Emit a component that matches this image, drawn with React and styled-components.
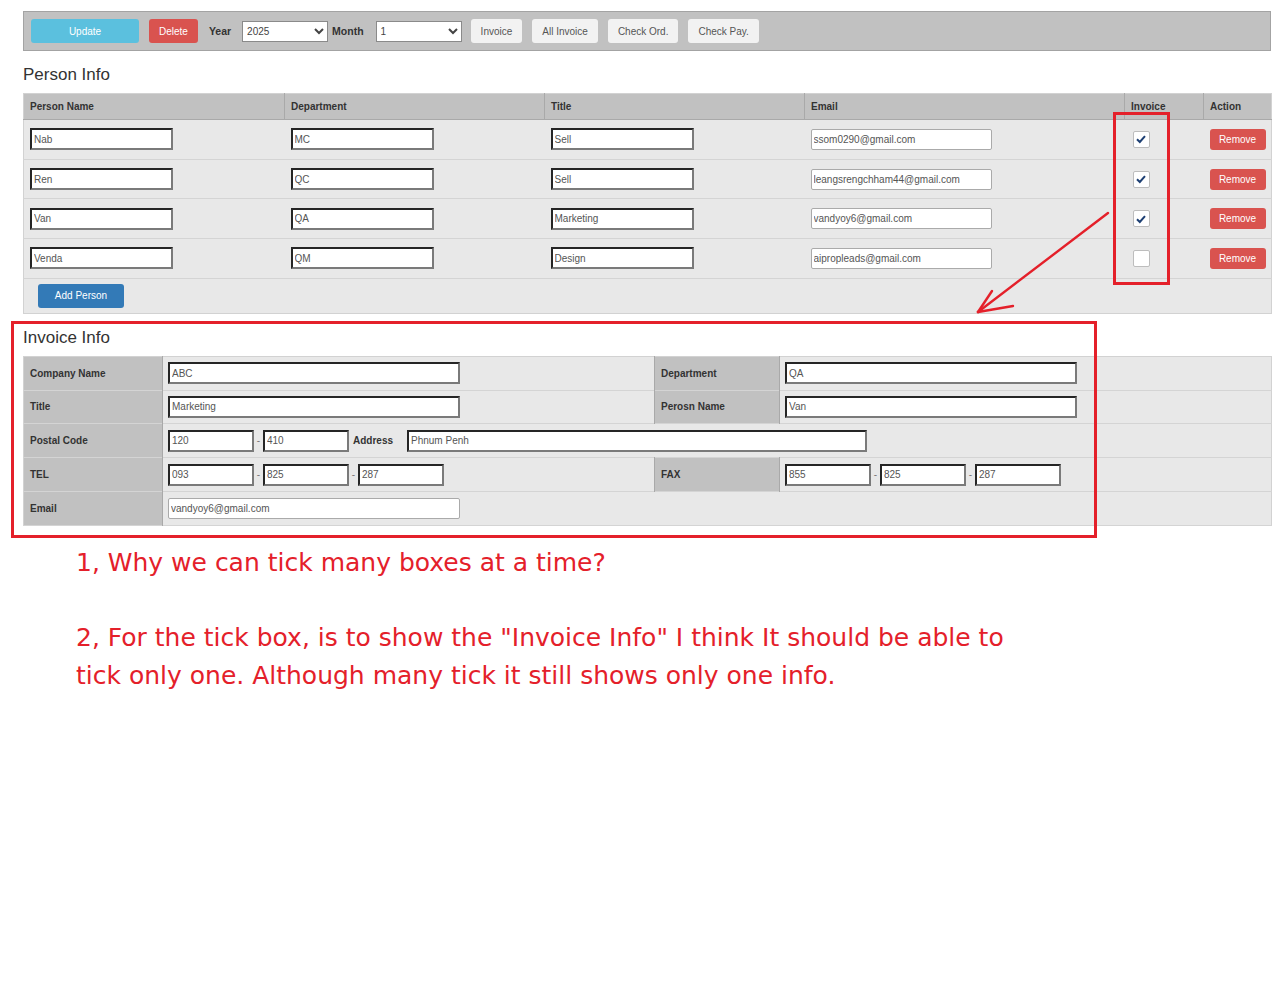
import styled, { createGlobalStyle } from "styled-components";

const GlobalStyle = createGlobalStyle`
  html, body {
    margin: 0;
    padding: 0;
    background: #ffffff;
  }
  body {
    font-family: "Liberation Sans", Arial, sans-serif;
    font-size: 10px;
    color: #333;
  }
`;

const RED = "#e4202a";

const Page = styled.div`
  position: relative;
  width: 1248px;
  padding: 11px 0 60px 23px;
`;

const Toolbar = styled.div`
  display: flex;
  align-items: center;
  height: 38px;
  padding-left: 7px;
  background: #c1c1c1;
  border: 1px solid #a3a3a3;
`;

const Button = styled.button`
  height: 24px;
  width: ${(p) => p.$w || "auto"};
  padding: 0 10px;
  margin-right: 10px;
  border: none;
  border-radius: 3px;
  font-family: "Liberation Sans", Arial, sans-serif;
  font-size: 10px;
  color: ${(p) => (p.$color ? "#fff" : "#555")};
  background: ${(p) => p.$color || "#f2f2f2"};
`;

const Label = styled.span`
  font-weight: bold;
  font-size: 10.5px;
  color: #333;
  margin-left: ${(p) => p.$ml || "0"};
  margin-right: ${(p) => p.$mr || "11px"};
`;

const Select = styled.select`
  width: 86px;
  height: 21px;
  margin-right: ${(p) => p.$mr || "4px"};
  font-family: "Liberation Sans", Arial, sans-serif;
  font-size: 10px;
  color: #444;
  background: #fff;
  border: 1px solid #8a8a8a;
`;

const Heading = styled.h2`
  margin: 13px 0 7px;
  font-weight: normal;
  font-size: 17px;
  line-height: 22px;
  color: #333;
`;

const Table = styled.table`
  width: 1248px;
  border-collapse: collapse;
  table-layout: fixed;
  border: 1px solid #d2d2d2;
  background: #e8e8e8;
`;

const Th = styled.th`
  height: 25px;
  padding: 0 6px;
  text-align: left;
  font-size: 10px;
  font-weight: bold;
  color: #333;
  background: #c1c1c1;
  border-left: 1px solid #a9a9a9;
  border-bottom: 1px solid #a9a9a9;
  &:first-child {
    border-left: none;
  }
`;

const Row = styled.tr`
  height: 39.7px;
  border-bottom: 1px solid #d4d4d4;
`;

const Td = styled.td`
  padding: 0 0 0 ${(p) => p.$pl || "6px"};
  vertical-align: middle;
`;

const TextBox = styled.input`
  box-sizing: border-box;
  width: ${(p) => p.$w || "143px"};
  height: ${(p) => (p.$thin ? "21px" : "22px")};
  padding: 0 2px;
  font-family: "Liberation Sans", Arial, sans-serif;
  font-size: 10px;
  color: #555;
  background: #fff;
  border: ${(p) => (p.$thin ? "1px solid #aaa" : "2px inset #7a7a7a")};
  border-radius: ${(p) => (p.$thin ? "2px" : "0")};
  vertical-align: middle;
  outline: none;
`;

const Check = styled.span`
  display: inline-flex;
  align-items: center;
  justify-content: center;
  box-sizing: border-box;
  width: 17px;
  height: 17px;
  background: #fff;
  border: 1px solid #bdbdbd;
  border-radius: 2px;
  vertical-align: middle;
`;

const RemoveButton = styled.button`
  width: 56px;
  height: 21px;
  border: none;
  border-radius: 3px;
  font-family: "Liberation Sans", Arial, sans-serif;
  font-size: 10px;
  color: #fff;
  background: #d9534f;
`;

const FooterRow = styled.tr`
  height: 35px;
`;

const AddButton = styled.button`
  width: 86px;
  height: 24px;
  margin-left: 8px;
  border: none;
  border-radius: 3px;
  font-family: "Liberation Sans", Arial, sans-serif;
  font-size: 10px;
  color: #fff;
  background: #337ab7;
`;

const InvRow = styled.tr`
  height: 33.8px;
  border-bottom: 1px solid #d4d4d4;
`;

const InvLabel = styled.td`
  padding: 0 6px;
  font-size: 10px;
  font-weight: bold;
  color: #333;
  background: #c1c1c1;
  border-right: 1px solid #a9a9a9;
  border-left: 1px solid #a9a9a9;
  &:first-child {
    border-left: none;
  }
`;

const InvValue = styled.td`
  padding: 0 0 0 5px;
  white-space: nowrap;
`;

const Dash = styled.span`
  display: inline-block;
  width: 9px;
  text-align: center;
  color: #777;
  font-size: 10px;
  vertical-align: middle;
`;

const InlineLabel = styled.span`
  display: inline-block;
  margin: 0 14px 0 4px;
  font-weight: bold;
  font-size: 10px;
  color: #333;
  vertical-align: middle;
`;

const Note = styled.p`
  width: 960px;
  margin: ${(p) => p.$m || "0"};
  padding-left: 53px;
  font-family: "DejaVu Sans", Verdana, sans-serif;
  font-size: 25px;
  line-height: 38px;
  color: ${RED};
`;

const RedFrame = styled.div`
  position: absolute;
  box-sizing: border-box;
  border: 3px solid ${RED};
  pointer-events: none;
`;

const Arrow = styled.svg`
  position: absolute;
  left: 0;
  top: 0;
  pointer-events: none;
`;

const people = [
  { name: "Nab", dept: "MC", title: "Sell", email: "ssom0290@gmail.com", inv: true },
  { name: "Ren", dept: "QC", title: "Sell", email: "leangsrengchham44@gmail.com", inv: true },
  { name: "Van", dept: "QA", title: "Marketing", email: "vandyoy6@gmail.com", inv: true },
  { name: "Venda", dept: "QM", title: "Design", email: "aipropleads@gmail.com", inv: false },
];

const Box = ({ v, w, thin }) => <TextBox value={v} readOnly $w={w} $thin={thin} />;

const App = () => {
  return (
    <>
      <GlobalStyle />
      <Page>
        <Toolbar>
          <Button $w="108px" $color="#5bc0de">Update</Button>
          <Button $color="#d9534f">Delete</Button>
          <Label $ml="1px">Year</Label>
          <Select defaultValue="2025">
            <option>2025</option>
          </Select>
          <Label $mr="12px">Month</Label>
          <Select defaultValue="1" $mr="9px">
            <option>1</option>
          </Select>
          <Button>Invoice</Button>
          <Button>All Invoice</Button>
          <Button>Check Ord.</Button>
          <Button>Check Pay.</Button>
        </Toolbar>

        <Heading>Person Info</Heading>
        <Table>
          <colgroup>
            <col style={{ width: 261 }} />
            <col style={{ width: 260 }} />
            <col style={{ width: 260 }} />
            <col style={{ width: 320 }} />
            <col style={{ width: 79 }} />
            <col style={{ width: 68 }} />
          </colgroup>
          <thead>
            <tr>
              <Th>Person Name</Th>
              <Th>Department</Th>
              <Th>Title</Th>
              <Th>Email</Th>
              <Th>Invoice</Th>
              <Th>Action</Th>
            </tr>
          </thead>
          <tbody>
            {people.map((p) => (
              <Row key={p.name}>
                <Td><Box v={p.name} /></Td>
                <Td><Box v={p.dept} /></Td>
                <Td><Box v={p.title} /></Td>
                <Td><Box v={p.email} w="181px" thin /></Td>
                <Td $pl="8px">
                  <Check>
                    {p.inv && (
                      <svg width="12" height="12" viewBox="0 0 12 12">
                        <path d="M2 6.3 L4.8 9 L10 3.2" fill="none" stroke="#1d3f73" strokeWidth="2" />
                      </svg>
                    )}
                  </Check>
                </Td>
                <Td><RemoveButton>Remove</RemoveButton></Td>
              </Row>
            ))}
            <FooterRow>
              <Td colSpan={6}><AddButton>Add Person</AddButton></Td>
            </FooterRow>
          </tbody>
        </Table>

        <Heading>Invoice Info</Heading>
        <Table>
          <colgroup>
            <col style={{ width: 139 }} />
            <col style={{ width: 492 }} />
            <col style={{ width: 125 }} />
            <col style={{ width: 492 }} />
          </colgroup>
          <tbody>
            <InvRow>
              <InvLabel>Company Name</InvLabel>
              <InvValue><Box v="ABC" w="292px" /></InvValue>
              <InvLabel>Department</InvLabel>
              <InvValue><Box v="QA" w="292px" /></InvValue>
            </InvRow>
            <InvRow>
              <InvLabel>Title</InvLabel>
              <InvValue><Box v="Marketing" w="292px" /></InvValue>
              <InvLabel>Perosn Name</InvLabel>
              <InvValue><Box v="Van" w="292px" /></InvValue>
            </InvRow>
            <InvRow>
              <InvLabel>Postal Code</InvLabel>
              <InvValue colSpan={3}>
                <Box v="120" w="86px" />
                <Dash>-</Dash>
                <Box v="410" w="86px" />
                <InlineLabel>Address</InlineLabel>
                <Box v="Phnum Penh" w="460px" />
              </InvValue>
            </InvRow>
            <InvRow>
              <InvLabel>TEL</InvLabel>
              <InvValue>
                <Box v="093" w="86px" />
                <Dash>-</Dash>
                <Box v="825" w="86px" />
                <Dash>-</Dash>
                <Box v="287" w="86px" />
              </InvValue>
              <InvLabel>FAX</InvLabel>
              <InvValue>
                <Box v="855" w="86px" />
                <Dash>-</Dash>
                <Box v="825" w="86px" />
                <Dash>-</Dash>
                <Box v="287" w="86px" />
              </InvValue>
            </InvRow>
            <InvRow>
              <InvLabel>Email</InvLabel>
              <InvValue colSpan={3}><Box v="vandyoy6@gmail.com" w="292px" thin /></InvValue>
            </InvRow>
          </tbody>
        </Table>

        <Note $m="18px 0 37px">1, Why we can tick many boxes at a time?</Note>
        <Note>
          2, For the tick box, is to show the "Invoice Info" I think It should be able to tick only one. Although many tick it still shows only one info.
        </Note>

        <RedFrame style={{ left: 1113, top: 112, width: 57, height: 173 }} />
        <RedFrame style={{ left: 11, top: 321, width: 1086, height: 217 }} />
        <Arrow width="1280" height="400" viewBox="0 0 1280 400">
          <g fill="none" stroke={RED} strokeWidth="2.4" strokeLinecap="round">
            <path d="M1108 213 L978 312" />
            <path d="M978 312 L1013 306" />
            <path d="M978 312 L992 291" />
          </g>
        </Arrow>
      </Page>
    </>
  );
};

export default App;
